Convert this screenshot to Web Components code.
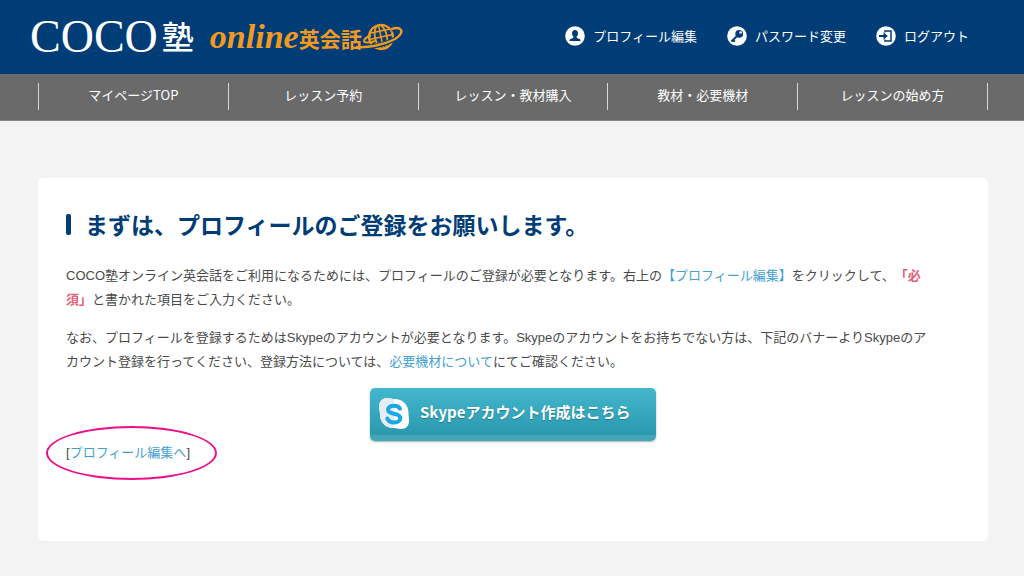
<!DOCTYPE html>
<html lang="ja">
<head>
<meta charset="utf-8">
<meta name="viewport" content="width=device-width, initial-scale=1">
<title>COCO塾 online英会話</title>
<style>
  body {
    margin: 0;
    background: #f3f3f3;
    color: #4a4a4a;
    font: 13px/24px "Liberation Sans", "Noto Sans CJK JP", sans-serif;
    text-spacing-trim: space-all;
  }
  p { margin: 0; }
  .required { color: #e2607a; font-weight: bold; }
  p a { color: #459fd0; text-decoration: none; }
</style>
</head>
<body>
<site-header>
  <brand-logo slot="brand"></brand-logo>
  <header-link icon="user" href="#profile">プロフィール編集</header-link>
  <header-link icon="key" href="#password">パスワード変更</header-link>
  <header-link icon="exit" href="#logout">ログアウト</header-link>
</site-header>
<site-nav>
  <nav-item href="#top">マイページTOP</nav-item>
  <nav-item href="#reserve">レッスン予約</nav-item>
  <nav-item href="#shop">レッスン・教材購入</nav-item>
  <nav-item href="#equipment">教材・必要機材</nav-item>
  <nav-item href="#howto">レッスンの始め方</nav-item>
</site-nav>
<content-card>
  <span slot="title">まずは、プロフィールのご登録をお願いします。</span>
  <text-block><p>COCO塾オンライン英会話をご利用になるためには、プロフィールのご登録が必要となります。右上の<a href="#profile">【プロフィール編集】</a>をクリックして、<span class="required">「必須」</span>と書かれた項目をご入力ください。</p></text-block>
  <text-block><p>なお、プロフィールを登録するためはSkypeのアカウントが必要となります。Skypeのアカウントをお持ちでない方は、下記のバナーよりSkypeのアカウント登録を行ってください、登録方法については、<a href="#equipment">必要機材について</a>にてご確認ください。</p></text-block>
  <skype-banner href="#skype">Skypeアカウント作成はこちら</skype-banner>
  <circled-link href="#profile">プロフィール編集へ</circled-link>
</content-card>

<script>
const define = (name, render) => customElements.define(name, class extends HTMLElement {
  constructor() {
    super();
    this.attachShadow({ mode: "open" });
  }
  connectedCallback() {
    this.shadowRoot.innerHTML = render(this);
  }
});

const icons = {
  user: '<path d="M10 4c-2 0-3 1.300-3 3.200 0 1.600.6 2.700 1.300 3.400v1.100L4.600 13.400V15h10.800v-1.600l-3.700-1.700v-1.100c.7-.7 1.300-1.800 1.300-3.400C13 5.300 12 4 10 4z" fill="#003c76"/>',
  key: '<circle cx="12.200" cy="7.800" r="3.900" fill="#003c76"/><circle cx="13.600" cy="6.500" r="1.300" fill="#fff"/><path d="M9.500 10.500 4.500 15.500M6 14l1.800 1.800" stroke="#003c76" stroke-width="2" fill="none"/>',
  exit: '<path d="M9 6.500V5h6v10H9v-1.500" stroke="#003c76" stroke-width="1.500" fill="none"/><path d="M3 8.900h4.500V6.200l4.300 3.800-4.300 3.800v-2.700H3z" fill="#003c76"/>'
};

define("site-header", () => `
  <style>
    :host { display: block; background: #003c76; }
    header { display: flex; align-items: center; justify-content: space-between; min-height: 74px; padding: 0 55px 0 30px; }
    nav { display: flex; gap: 30px; padding-bottom: 2px; }
  </style>
  <header><slot name="brand"></slot><nav><slot></slot></nav></header>`);

define("brand-logo", () => `
  <style>
    :host { display: block; }
    a { display: flex; align-items: center; color: #fff; text-decoration: none; white-space: nowrap; }
    .coco { font: 46px/56px "Liberation Serif", serif; }
    .juku { font: 500 32px/52px "Noto Sans CJK JP", sans-serif; margin-left: 4px; padding-bottom: 4px; }
    .online { font: italic bold 34px/56px "Liberation Serif", serif; color: #f19a22; margin-left: 16px; }
    .eikaiwa { font: bold 21px/56px "Noto Sans CJK JP", sans-serif; color: #f19a22; padding-top: 2px; }
    svg { width: 52px; height: 32px; margin-left: -11px; }
  </style>
  <a href="#home" aria-label="COCO塾 online英会話">
    <span class="coco">COCO</span><span class="juku">塾</span>
    <span class="online">online</span><span class="eikaiwa">英会話</span>
    <svg viewBox="0 0 52 32" fill="none" stroke="#f19a22" aria-hidden="true">
      <g transform="rotate(-12 30 16)">
        <circle cx="30" cy="16" r="12" stroke-width="2.200"/>
        <ellipse cx="30" cy="16" rx="6" ry="12" stroke-width="1.800"/>
        <path d="M30 4v24M19.500 10h21M18 16h24M19.500 22h21" stroke-width="1.500"/>
      </g>
      <path d="M12 26c11 0 21-2 30-7 8-4 10-9 7-11-2-1.500-6-.8-9 .4" stroke="#003c76" stroke-width="4.500"/>
      <path d="M5 26c12 1 27-2 37-7 8-4 10-9 7-11-2-1.500-6-.8-9 .4" stroke-width="2.500"/>
      <path d="M20 14c-4 2-7 4-7 6s6 2 11 0" stroke-width="2"/>
    </svg>
  </a>`);

define("header-link", el => `
  <style>
    :host { display: block; }
    a { display: flex; align-items: center; gap: 8px; color: #fff; text-decoration: none; white-space: nowrap; font: 13px/24px "Noto Sans CJK JP", sans-serif; }
    svg { width: 20px; height: 20px; }
  </style>
  <a href="${el.getAttribute("href")}">
    <svg viewBox="0 0 20 20" aria-hidden="true"><circle cx="10" cy="10" r="9.800" fill="#fff"/>${icons[el.getAttribute("icon")]}</svg>
    <slot></slot>
  </a>`);

define("site-nav", () => `
  <style>
    :host { display: block; background: #6a6a6a; border-bottom: 1px solid #858585; }
    nav { display: flex; margin: 0 36px 0 38px; padding: 9px 0 10px; }
    nav::after { content: ""; width: 1px; background: #d8d8d8; }
  </style>
  <nav><slot></slot></nav>`);

define("nav-item", el => `
  <style>
    :host { display: block; flex: 1; border-left: 1px solid #d8d8d8; }
    a { display: block; padding-bottom: 3px; text-align: center; color: #fff; text-decoration: none; white-space: nowrap; font: 13px/24px "Noto Sans CJK JP", sans-serif; }
  </style>
  <a href="${el.getAttribute("href")}"><slot></slot></a>`);

define("content-card", () => `
  <style>
    :host { display: block; margin: 57px 36px 35px 38px; }
    main { background: #fff; border-radius: 5px; padding: 30px 28px 76px; }
    h1 { display: flex; align-items: center; gap: 14px; margin: 0 0 24px; color: #003c76; font: bold 23px/32px "Noto Sans CJK JP", sans-serif; }
    h1::before { content: ""; width: 5px; height: 21px; border-radius: 2px; background: #003c76; }
  </style>
  <main><h1><slot name="title"></slot></h1><slot></slot></main>`);

define("text-block", () => `
  <style>
    :host { display: block; margin-bottom: 14px; padding-right: 28px; }
  </style>
  <slot></slot>`);

define("skype-banner", el => `
  <style>
    :host { display: flex; justify-content: center; }
    a {
      display: flex; align-items: center; gap: 10px; box-sizing: border-box; min-height: 53px; min-width: 286px; padding: 0 24px 0 8px;
      border-bottom: 6px solid #43a5b8; border-radius: 5px; background: linear-gradient(#44b7ce, #2a99ae) padding-box;
      box-shadow: 0 1px 2px #00000055; color: #fff; text-decoration: none; white-space: nowrap;
      font: bold 15px/24px "Noto Sans CJK JP", sans-serif; text-shadow: 0 1px 1px #1c7c8f;
    }
    svg { width: 32px; height: 34px; margin-top: 4px; }
  </style>
  <a href="${el.getAttribute("href")}">
    <svg viewBox="0 0 32 34" aria-hidden="true">
      <path d="M9 1C13 1 13 2 16 2c9 0 14.500 6 14.500 14 0 3 .5 5 .5 8 0 5-3 8-8 8-3 0-4-1-7-1C7 31 2 25 2 17c0-3-1-4-1-7C1 5 4 1 9 1z" fill="#fff"/>
      <path d="M9 1C13 1 13 2 16 2v29C7 31 2 25 2 17c0-3-1-4-1-7C1 5 4 1 9 1z" fill="#e5edf0"/>
      <path d="M22 11.800C21 9.300 18.500 8.700 16 8.700c-3.200 0-6 1.300-6 4 0 5.500 12.300 2.500 12.300 8.300 0 3-3 4.500-6.300 4.500-3 0-5.500-1-6.700-4" fill="none" stroke="#16a9e6" stroke-width="4" stroke-linecap="round"/>
    </svg>
    <slot></slot>
  </a>`);

define("circled-link", el => `
  <style>
    :host { display: block; }
    span { position: relative; display: inline-block; }
    a { color: #459fd0; text-decoration: none; }
    i { position: absolute; inset: -15px -27px -15px -20px; border: 2px solid #ec0f8c; border-radius: 50%; pointer-events: none; }
  </style>
  <span>[<a href="${el.getAttribute("href")}"><slot></slot></a>]<i></i></span>`);
</script>
</body>
</html>
